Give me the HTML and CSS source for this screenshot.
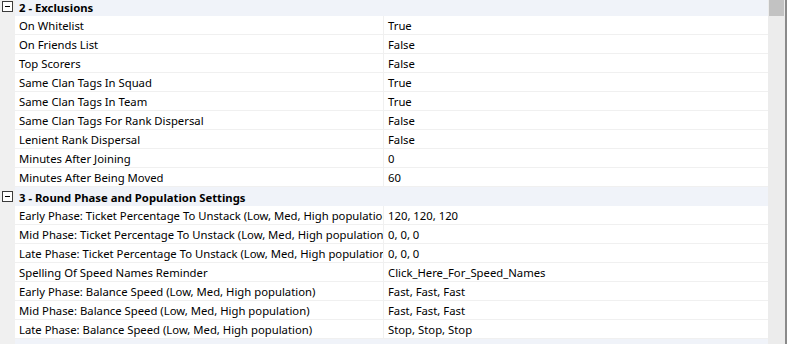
FILE: index.html
```html
<!DOCTYPE html>
<html lang="en">
<head>
  <meta charset="UTF-8">
  <title>Settings</title>
  <link rel="stylesheet" href="styles.css">
</head>
<body>
  <div class="window">
    <div class="grid">
      <!-- Category 2 -->
      <div class="category">
        <span class="toggle"></span>
        <span class="cat-name">2 - Exclusions</span>
      </div>
      <div class="row"><div class="name">On Whitelist</div><div class="value">True</div></div>
      <div class="row"><div class="name">On Friends List</div><div class="value">False</div></div>
      <div class="row"><div class="name">Top Scorers</div><div class="value">False</div></div>
      <div class="row"><div class="name">Same Clan Tags In Squad</div><div class="value">True</div></div>
      <div class="row"><div class="name">Same Clan Tags In Team</div><div class="value">True</div></div>
      <div class="row"><div class="name">Same Clan Tags For Rank Dispersal</div><div class="value">False</div></div>
      <div class="row"><div class="name">Lenient Rank Dispersal</div><div class="value">False</div></div>
      <div class="row"><div class="name">Minutes After Joining</div><div class="value">0</div></div>
      <div class="row"><div class="name">Minutes After Being Moved</div><div class="value">60</div></div>

      <!-- Category 3 -->
      <div class="category">
        <span class="toggle"></span>
        <span class="cat-name">3 - Round Phase and Population Settings</span>
      </div>
      <div class="row"><div class="name">Early Phase: Ticket Percentage To Unstack (Low, Med, High population)</div><div class="value">120, 120, 120</div></div>
      <div class="row"><div class="name">Mid Phase: Ticket Percentage To Unstack (Low, Med, High population)</div><div class="value">0, 0, 0</div></div>
      <div class="row"><div class="name">Late Phase: Ticket Percentage To Unstack (Low, Med, High population)</div><div class="value">0, 0, 0</div></div>
      <div class="row"><div class="name">Spelling Of Speed Names Reminder</div><div class="value">Click_Here_For_Speed_Names</div></div>
      <div class="row"><div class="name">Early Phase: Balance Speed (Low, Med, High population)</div><div class="value">Fast, Fast, Fast</div></div>
      <div class="row"><div class="name">Mid Phase: Balance Speed (Low, Med, High population)</div><div class="value">Fast, Fast, Fast</div></div>
      <div class="row"><div class="name">Late Phase: Balance Speed (Low, Med, High population)</div><div class="value">Stop, Stop, Stop</div></div>

      <!-- next category, scrolled below the fold -->
      <div class="category"></div>
    </div>
    <div class="scrollbar">
      <div class="thumb"></div>
    </div>
    <div class="edge"></div>
  </div>
</body>
</html>
```

FILE: styles.css
```css
body {
  margin: 0;
  padding: 0;
  background-color: #fff;
  font-family: "Noto Sans", Arial, sans-serif;
  font-size: 11.3px;
  color: #000;
}

.window {
  width: 790px;
  height: 344px;
  overflow: hidden;
  display: flex;
}

.grid {
  width: 768px;
  margin-top: -3px;
  display: flex;
  flex-direction: column;
  background-color: #f0f0f0;
}

.category {
  height: 19px;
  flex: none;
  display: flex;
  align-items: center;
  background-color: #f0f3f9;
  box-shadow: inset 15px 0 0 #f0f0f0;
}

.toggle {
  width: 9px;
  height: 9px;
  margin-left: 2px;
  border: 1px solid #3c3c3c;
  background-color: #fff;
  position: relative;
}

.toggle::after {
  content: "";
  position: absolute;
  left: 2px;
  top: 4px;
  width: 5px;
  height: 1px;
  background-color: #000;
}

.cat-name {
  font-weight: bold;
  margin-left: 6px;
  padding-top: 1px;
}

.row {
  height: 18px;
  flex: none;
  display: flex;
  margin-left: 15px;
  border-bottom: 1px solid #f0f0f0;
  background-color: #fff;
}

.name {
  width: 369px;
  padding: 1px 0 0 4px;
  box-sizing: border-box;
  white-space: nowrap;
  overflow: hidden;
  line-height: 17px;
  border-right: 1px solid #f0f0f0;
}

.value {
  flex: 1;
  padding: 1px 0 0 4px;
  white-space: nowrap;
  line-height: 17px;
}

.scrollbar {
  width: 17px;
  flex: none;
  background-color: #ececec;
}

.thumb {
  height: 16px;
  background-color: #c2c2c2;
  margin: 0 1px;
}

.edge {
  width: 2px;
  flex: none;
  background-color: #8a8a8a;
}
```
